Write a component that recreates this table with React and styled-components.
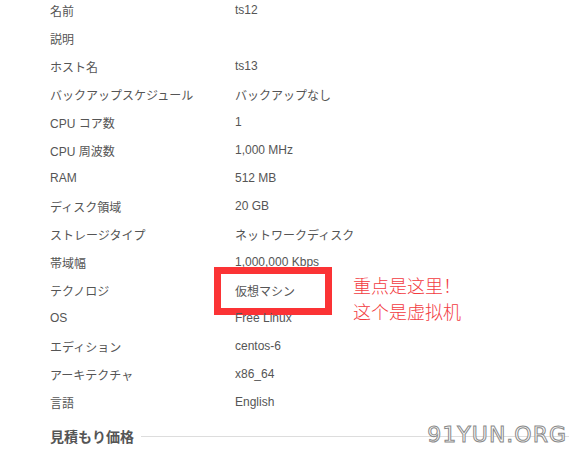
import React from "react";
import styled, { createGlobalStyle } from "styled-components";

const rows = [
    ["名前", "ts12"],
    ["説明", ""],
    ["ホスト名", "ts13"],
    ["バックアップスケジュール", "バックアップなし"],
    ["CPU コア数", "1"],
    ["CPU 周波数", "1,000 MHz"],
    ["RAM", "512 MB"],
    ["ディスク領域", "20 GB"],
    ["ストレージタイプ", "ネットワークディスク"],
    ["帯域幅", "1,000,000 Kbps"],
    ["テクノロジ", "仮想マシン", true],
    ["OS", "Free Linux"],
    ["エディション", "centos-6"],
    ["アーキテクチャ", "x86_64"],
    ["言語", "English"],
];

export default function App() {
    return (
        <Page>
            <GlobalStyle />
            <List>
                {rows.map(([label, value, marked]) => (
                    <Row key={label}>
                        <Label>{label}</Label>
                        <Value>
                            {value}
                            {marked && (
                                <>
                                    <Highlight />
                                    <Note>
                                        重点是这里！
                                        <br />
                                        这个是虚拟机
                                    </Note>
                                </>
                            )}
                        </Value>
                    </Row>
                ))}
            </List>
            <Heading>
                <HeadingText>見積もり価格</HeadingText>
                <Rule />
            </Heading>
            <Watermark>91YUN.ORG</Watermark>
        </Page>
    );
}

const GlobalStyle = createGlobalStyle`
    body {
        margin: 0;
        background: #fff;
        font-family: "Liberation Sans", "Noto Sans CJK JP", sans-serif;
    }
`;

const Page = styled.div`
    position: relative;
    width: 569px;
    height: 450px;
    overflow: hidden;
    padding-left: 50px;
    box-sizing: border-box;
`;

const List = styled.div`
    display: flex;
    flex-direction: column;
    margin-top: -4px;
`;

const Row = styled.div`
    display: grid;
    grid-template-columns: 185px 1fr;
    height: 28px;
    align-items: center;
    font-size: 12px;
    color: #555;
`;

const Label = styled.div``;

const Value = styled.div`
    position: relative;
`;

const Highlight = styled.div`
    position: absolute;
    left: -21px;
    top: -15px;
    width: 118px;
    height: 48px;
    border: 7px solid #fb3335;
    box-sizing: border-box;
`;

const Note = styled.div`
    position: absolute;
    left: 118px;
    top: -10px;
    width: 160px;
    font-family: "Noto Sans CJK SC", sans-serif;
    font-weight: 300;
    font-size: 18px;
    line-height: 26px;
    color: #f23b3f;
`;

const Heading = styled.div`
    display: flex;
    align-items: center;
    gap: 7px;
    margin-top: 10px;
    height: 20px;
`;

const HeadingText = styled.div`
    font-size: 14px;
    font-weight: bold;
    color: #555;
    font-family: "Noto Sans CJK JP", sans-serif;
`;

const Rule = styled.div`
    flex: 1;
    height: 1px;
    background: #ddd;
`;

const Watermark = styled.div`
    position: absolute;
    right: 2px;
    bottom: 3px;
    font-family: "DejaVu Sans", sans-serif;
    font-size: 22px;
    letter-spacing: 1px;
    color: #fff;
    -webkit-text-stroke: 1px #8a8a8a;
`;
